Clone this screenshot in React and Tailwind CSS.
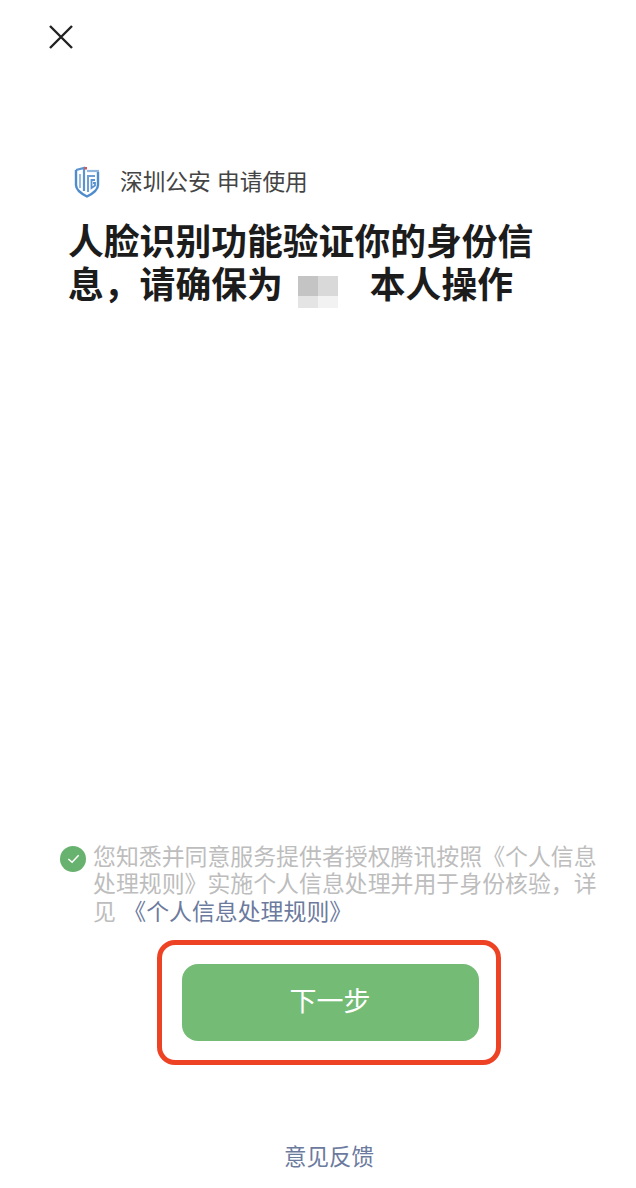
const ShieldLogo = () => (
  <svg viewBox="0 0 26 32" className="w-[26px] h-[32px]" fill="none">
    <path d="M2 4 L10 2 V25" stroke="#5b93cf" strokeWidth="2.2" />
    <path d="M2 4 V19 C2 24 8 28 13 30.5 C18 28 24 24 24 19 V6" stroke="#4f8ccb" strokeWidth="2.4" />
    <path d="M13 5 H25" stroke="#8fb6de" strokeWidth="2.2" />
    <path d="M6 8 V22" stroke="#7ba9d8" strokeWidth="1.6" />
    <path d="M14 26 V10 H21" stroke="#6d9fd4" strokeWidth="2" />
    <path d="M21 14 H17.5 V22 L21 19.5 V17 H19" stroke="#5b93cf" strokeWidth="1.8" />
    <rect x="10.5" y="1" width="2.5" height="2.5" fill="#d9534f" />
  </svg>
)

const Mosaic = () => (
  <span className="inline-grid grid-cols-[20px_20px] grid-rows-[20px_12px] align-[2px] ml-[15px] mr-[32px] -mt-[8px]">
    <span className="bg-[#c4c4c4]"></span>
    <span className="bg-[#d9d9d9]"></span>
    <span className="bg-[#e4e4e4]"></span>
    <span className="bg-[#f2f2f2]"></span>
  </span>
)

export default function App() {
  return (
    <div className="w-[636px] h-[1188px] bg-white flex flex-col font-['Liberation_Sans','Noto_Sans_CJK_SC',sans-serif] overflow-hidden">
      <div className="pl-[49px] pt-[25px]">
        <svg viewBox="0 0 24 24" className="w-[24px] h-[24px]" stroke="#222" strokeWidth="2.4" fill="none">
          <path d="M1 1 L23 23 M23 1 L1 23" />
        </svg>
      </div>

      <div className="pl-[74px] mt-[117px] flex items-center h-[32px]">
        <ShieldLogo />
        <span className="ml-[20px] text-[22.7px] text-[#444] whitespace-nowrap">深圳公安 申请使用</span>
      </div>

      <h1 className="pl-[68px] mt-[24px] w-[560px] text-[35.8px] leading-[43px] font-semibold text-[#1c1c1c]">
        人脸识别功能验证你的身份信
        <br />
        息，请确保为
        <Mosaic />
        本人操作
      </h1>

      <div className="flex-1"></div>

      <div className="pl-[60px] flex items-start">
        <span className="w-[26px] h-[26px] mt-[2px] rounded-full bg-[#67b26f] flex items-center justify-center shrink-0">
          <svg viewBox="0 0 16 16" className="w-[15px] h-[15px]" fill="none" stroke="#fff" strokeWidth="1.6">
            <path d="M2.5 8.5 L6.5 12 L13.5 4.5" />
          </svg>
        </span>
        <p className="ml-[7px] w-[510px] text-[22.9px] leading-[27.5px] text-[#bdbdbd]">
          您知悉并同意服务提供者授权腾讯按照《个人信息
          <br />
          处理规则》实施个人信息处理并用于身份核验，详
          <br />
          见 <span className="text-[#6c7a9e] ml-[1px]">《个人信息处理规则》</span>
        </p>
      </div>

      <div className="mt-[14px] ml-[157px] w-[344px] h-[125px] border-[5px] border-[#ee4225] rounded-[18px] flex items-center justify-center">
        <button className="w-[297px] h-[77px] ml-[2px] rounded-[16px] bg-[#74bb76] text-white text-[27px]">下一步</button>
      </div>

      <div className="mt-[77px] mb-[14px] text-center pl-[22px] text-[22.5px] leading-[32px] text-[#6c7a9e]">意见反馈</div>
    </div>
  )
}
